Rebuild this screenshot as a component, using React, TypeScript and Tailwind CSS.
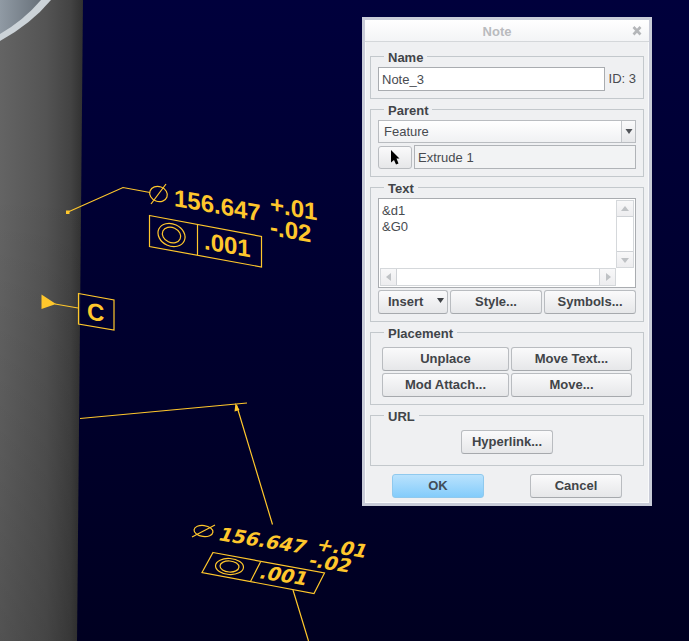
import type { ButtonHTMLAttributes, ReactNode } from "react";

const buttonStyle =
  "h-6 rounded-[3px] border border-[#b9bcc0] border-b-[#a6a9ad] bg-linear-to-b from-[#fafafb] to-[#e6e7e9] font-bold text-[#414448]";

function Button({ className = "", ...rest }: ButtonHTMLAttributes<HTMLButtonElement>) {
  return <button type="button" className={`${buttonStyle} ${className}`} {...rest} />;
}

function Group({ title, className = "", children }: { title: string; className?: string; children: ReactNode }) {
  return (
    <fieldset className={`min-w-0 border border-[#c3c8cc] px-[7px] pt-[3px] pb-[7px] ${className}`}>
      <legend className="ml-1.5 px-1 pt-0.5 font-bold leading-[13px] text-[#414448]">{title}</legend>
      {children}
    </fieldset>
  );
}

function Arrow({ points, label, className }: { points: string; label: string; className: string }) {
  return (
    <button
      type="button"
      aria-label={label}
      className={`flex shrink-0 items-center justify-center border-[#cfd2d6] bg-linear-to-b from-[#f8f8f9] to-[#ededef] ${className}`}
    >
      <svg width="8" height="8" viewBox="0 0 8 8" fill="#bfc2c5">
        <polygon points={points} />
      </svg>
    </button>
  );
}

function Scene() {
  return (
    <svg
      className="absolute inset-0 h-full w-full"
      viewBox="0 0 689 641"
      preserveAspectRatio="xMinYMin slice"
      fontFamily='"Liberation Sans", Arial, sans-serif'
      fontWeight="700"
      role="img"
      aria-label="Model annotations"
    >
      <defs>
        <linearGradient id="sky" x1="0" y1="0" x2="0" y2="1">
          <stop offset="0" stopColor="#00003c" />
          <stop offset="1" stopColor="#000021" />
        </linearGradient>
        <linearGradient id="wall" x1="0" y1="0" x2="1" y2="0">
          <stop offset="0" stopColor="#646464" />
          <stop offset="0.55" stopColor="#545454" />
          <stop offset="0.85" stopColor="#434343" />
          <stop offset="1" stopColor="#303030" />
        </linearGradient>
        <linearGradient id="shade" x1="0" y1="0" x2="0" y2="1">
          <stop offset="0.3" stopColor="#000" stopOpacity="0" />
          <stop offset="1" stopColor="#000" stopOpacity="0.18" />
        </linearGradient>
        <linearGradient id="bore" x1="0" y1="0" x2="1" y2="0">
          <stop offset="0" stopColor="#909aa4" />
          <stop offset="1" stopColor="#68717a" />
        </linearGradient>
      </defs>
      <rect width="689" height="641" fill="url(#sky)" />
      <path d="M0 0H83L77 641H0Z" fill="url(#wall)" />
      <path d="M0 0H83L77 641H0Z" fill="url(#shade)" />
      <path d="M0 41Q31 24 51 0H0Z" fill="#ccd3d8" />
      <path d="M0 34Q24 20 41 0H0Z" fill="url(#bore)" />

      <g fill="none" stroke="#ffc72c" strokeWidth="1.2">
        <path d="M68 212L123 187.500L150 192.500" />
        <ellipse cx="158.500" cy="194" rx="9" ry="7.500" transform="rotate(20 158.500 194)" />
        <path d="M151 204L166 184" />
        <path d="M149.500 215.500L261.500 236.500V267L149.500 246.500ZM197.500 224.500V255" />
        <ellipse cx="171.500" cy="235" rx="14" ry="11" transform="rotate(25 171.500 235)" />
        <ellipse cx="171.500" cy="235" rx="9.500" ry="7.500" transform="rotate(25 171.500 235)" />
        <path d="M55 304L78 308" />
        <path d="M78.500 293.500L114 300V330L78.500 324Z" />
        <path d="M80 418.500L247 403M236.500 405L272.500 524.500M293 590L308.500 641" />
        <ellipse cx="203.500" cy="531" rx="9.500" ry="5.500" transform="rotate(7 203.500 531)" />
        <path d="M192 537L215 525" />
        <path d="M213 552.500L324.500 573L314 593.500L202 572.500ZM260.500 562L250.500 581.500" />
        <ellipse cx="229.500" cy="566.500" rx="14" ry="8" transform="rotate(4 229.500 566.500)" />
        <ellipse cx="229.500" cy="566.500" rx="9.500" ry="5.500" transform="rotate(4 229.500 566.500)" />
      </g>
      <g fill="#ffc72c">
        <rect x="66" y="210.500" width="3.500" height="3.500" />
        <path d="M41.500 294.500L56 304L41.500 309Z" />
        <path d="M235.500 403L239.500 410L234.500 411.500Z" />
        <g fontSize="24">
          <text transform="translate(174 206) skewY(10)">156.647</text>
          <text transform="translate(270 212) skewY(10)">+.01</text>
          <text transform="translate(270 235) skewY(10)">-.02</text>
          <text transform="translate(204 249) skewY(10)">.001</text>
          <text transform="translate(87 319) skewY(10)">C</text>
        </g>
        <g fontSize="19" fontFamily='"DejaVu Sans", sans-serif'>
          <text transform="translate(217 540) skewY(9) skewX(-22)">156.647</text>
          <text transform="translate(315 550) skewY(9) skewX(-22)">+.01</text>
          <text transform="translate(307 566) skewY(9) skewX(-22)">-.02</text>
          <text transform="translate(258 578) skewY(9) skewX(-22)">.001</text>
        </g>
      </g>
    </svg>
  );
}

export default function App() {
  return (
    <main className="relative min-h-screen overflow-hidden bg-[#000021] font-['Liberation_Sans',Arial,sans-serif] text-[13px] leading-4 text-[#484b50]">
      <Scene />
      <section
        role="dialog"
        aria-labelledby="note-title"
        className="absolute top-[17px] left-[362px] w-[290px] border-3 border-[#c9ccd8] bg-[#eff0f2] shadow-[inset_0_0_0_1px_#f9fafb]"
      >
        <header className="relative flex h-[22px] items-center justify-center border-b border-[#d4d7da] bg-linear-to-b from-white to-[#f3f4f6] pt-0.5 pr-5">
          <h1 id="note-title" className="font-bold text-[#b9bbbe]">Note</h1>
          <button type="button" aria-label="Close" className="absolute top-1.5 right-1.5">
            <svg width="11" height="11" viewBox="0 0 11 11" stroke="#b4b6b9" strokeWidth="2.600">
              <path d="M1.500 1L8.500 8.500M8.500 1L1.500 8.500" />
            </svg>
          </button>
        </header>
        <form className="flex flex-col gap-[3px] px-[5px] pt-[7px] pb-[5px]" onSubmit={(e) => e.preventDefault()}>
          <Group title="Name">
            <div className="flex items-center gap-1">
              <input
                aria-label="Name"
                defaultValue="Note_3"
                className="h-6 min-w-0 flex-1 border border-[#a9acb0] bg-white px-[3px]"
              />
              <span className="whitespace-nowrap">ID: 3</span>
            </div>
          </Group>

          <Group title="Parent">
            <div className="relative">
              <select
                aria-label="Parent"
                className="block h-[23px] w-full appearance-none border border-[#b9bcc0] bg-linear-to-b from-white to-[#f0f1f3] px-[5px]"
              >
                <option>Feature</option>
              </select>
              <span className="pointer-events-none absolute inset-y-px right-px flex w-3.5 items-center justify-center border-l border-[#c3c6ca] bg-linear-to-b from-[#fafafb] to-[#e6e7e9]">
                <svg width="8" height="5" viewBox="0 0 8 5" fill="#505358">
                  <polygon points="0.500,0 7.500,0 4,5" />
                </svg>
              </span>
            </div>
            <div className="mt-0.5 flex items-center gap-0.5">
              <button
                type="button"
                aria-label="Select parent"
                className="flex h-[23px] w-[34px] items-center justify-center rounded-[3px] border border-[#b9bcc0] bg-linear-to-b from-[#fafafb] to-[#e6e7e9]"
              >
                <svg width="10" height="15" viewBox="0 0 10 15">
                  <path d="M1 0L9.500 8.500H6.500L8.500 13.500L6 14.500L4 10L1 12.500Z" fill="#000" />
                </svg>
              </button>
              <input
                aria-label="Parent feature"
                readOnly
                defaultValue="Extrude 1"
                className="h-6 min-w-0 flex-1 border border-[#b0b3b7] bg-[#f2f3f4] px-[3px]"
              />
            </div>
          </Group>

          <Group title="Text">
            <div className="grid h-[90px] grid-cols-[1fr_18px] grid-rows-[1fr_18px] border border-[#a9acb0] bg-white p-px">
              <textarea
                aria-label="Text"
                wrap="off"
                defaultValue={"&d1\n&G0"}
                className="resize-none overflow-hidden px-0.5 pt-[3px]"
              />
              <div className="flex flex-col justify-between border border-[#d5d8db]">
                <Arrow label="Scroll up" points="4,1 8,6 0,6" className="h-4 border-b" />
                <Arrow label="Scroll down" points="0,2 8,2 4,7" className="h-4 border-t" />
              </div>
              <div className="flex justify-between border border-[#d5d8db]">
                <Arrow label="Scroll left" points="6,0 6,8 1,4" className="w-4 border-r" />
                <Arrow label="Scroll right" points="2,0 2,8 7,4" className="w-4 border-l" />
              </div>
            </div>
            <div className="mt-0.5 grid grid-cols-[70px_1fr_1fr] gap-0.5">
              <Button className="flex items-center justify-between pr-[3px] pl-[9px]">
                Insert
                <svg width="7" height="8" viewBox="0 0 7 8" fill="#3f4246">
                  <polygon points="0,0 7,0 3.5,5" />
                </svg>
              </Button>
              <Button>Style...</Button>
              <Button>Symbols...</Button>
            </div>
          </Group>

          <Group title="Placement">
            <div className="mt-1 grid grid-cols-[127fr_121fr] gap-0.5 px-1">
              <Button>Unplace</Button>
              <Button>Move Text...</Button>
              <Button>Mod Attach...</Button>
              <Button>Move...</Button>
            </div>
          </Group>

          <Group title="URL">
            <div className="mt-1 mb-1 flex justify-center">
              <Button className="w-[92px]">Hyperlink...</Button>
            </div>
          </Group>

          <div className="mt-[5px] flex justify-between px-[22px]">
            <button
              type="submit"
              className="h-6 w-[92px] rounded-[3px] border border-[#8fc9ee] bg-linear-to-b from-[#b9e2fd] to-[#83ccfb] font-bold text-[#414c58]"
            >
              OK
            </button>
            <Button className="w-[92px]">Cancel</Button>
          </div>
        </form>
      </section>
    </main>
  );
}
